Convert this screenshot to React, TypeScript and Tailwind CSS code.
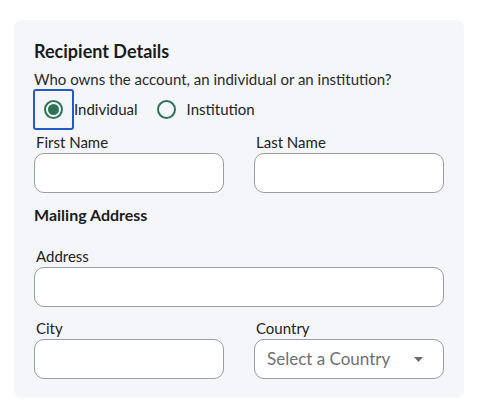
import React, { useState } from 'react';

const font = { fontFamily: 'Lato, "Noto Sans", sans-serif' };

const Field: React.FC<{ label: string }> = ({ label }) => (
  <div className="flex flex-col">
    <label className="h-[18px] pl-[2px] text-[15px] leading-[18px] text-[#222]">{label}</label>
    <input className="mt-[2px] h-[40px] w-full rounded-[10px] border border-[#9a9ca6] bg-white px-3 text-[16px] outline-none" />
  </div>
);

const Radio: React.FC<{ label: string; checked: boolean; focused?: boolean; onClick: () => void }> = ({
  label,
  checked,
  focused,
  onClick,
}) => (
  <button type="button" onClick={onClick} className="flex h-[40px] items-center">
    <span
      className={`flex h-[41px] w-[41px] items-center justify-center rounded-[3px] border-2 ${
        focused ? 'border-[#2559c5]' : 'border-transparent'
      }`}
    >
      <span className="flex h-[19px] w-[19px] items-center justify-center rounded-full border-2 border-[#2e7356]">
        {checked && <span className="h-[11px] w-[11px] rounded-full bg-[#2e7356]" />}
      </span>
    </span>
    <span className="text-[15px] leading-[20px] text-[#222]">{label}</span>
  </button>
);

const App: React.FC = () => {
  const [owner, setOwner] = useState<'individual' | 'institution'>('individual');

  return (
    <div className="min-h-[418px] bg-white pl-[14px] pt-[20px]" style={font}>
      <div className="w-[450px] rounded-lg bg-[#f5f6fa] px-[20px] pb-[19px] pt-[20px]">
        <h2 className="h-[22px] text-[18px] font-bold leading-[22px] text-[#1c1c1c]">Recipient Details</h2>
        <p className="mt-[6px] h-[22px] text-[15px] leading-[22px] text-[#2a2a2a]">
          Who owns the account, an individual or an institution?
        </p>

        <div className="-ml-[1px] mt-[-1px] flex items-center gap-[8px]">
          <Radio label="Individual" checked={owner === 'individual'} focused onClick={() => setOwner('individual')} />
          <Radio label="Institution" checked={owner === 'institution'} onClick={() => setOwner('institution')} />
        </div>

        <div className="mt-[4px] grid grid-cols-2 gap-[30px]">
          <Field label="First Name" />
          <Field label="Last Name" />
        </div>

        <h3 className="mt-[11px] h-[22px] text-[16px] font-bold leading-[22px] text-[#1c1c1c]">Mailing Address</h3>

        <div className="mt-[21px]">
          <Field label="Address" />
        </div>

        <div className="mt-[12px] grid grid-cols-2 gap-[30px]">
          <Field label="City" />
          <div className="flex flex-col">
            <label className="h-[18px] pl-[2px] text-[15px] leading-[18px] text-[#222]">Country</label>
            <div className="relative mt-[2px]">
              <select
                defaultValue=""
                className="h-[40px] w-full appearance-none rounded-[10px] border border-[#9a9ca6] bg-white pl-[12px] text-[17px] text-[#707070] outline-none"
                style={font}
              >
                <option value="" disabled>
                  Select a Country
                </option>
              </select>
              <svg
                className="pointer-events-none absolute right-[21px] top-[18px]"
                width="9"
                height="5"
                viewBox="0 0 9 5"
              >
                <path d="M0 0h9L4.5 5z" fill="#6b6b6b" />
              </svg>
            </div>
          </div>
        </div>
      </div>
    </div>
  );
};

export default App;
